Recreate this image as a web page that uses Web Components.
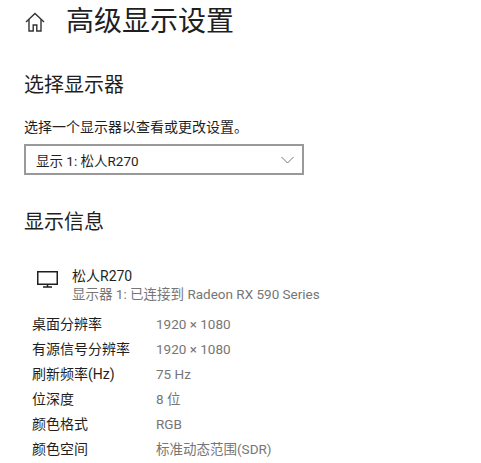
<!DOCTYPE html>
<html lang="zh-CN">
<head>
<meta charset="utf-8">
<style>
  html, body { margin: 0; padding: 0; background: #fff; }
  body { width: 481px; height: 463px; overflow: hidden; font-family: Roboto, "Noto Sans CJK SC", sans-serif; color: #1f1f1f; }
</style>
</head>
<body>
<settings-page>
  <page-title>高级显示设置</page-title>
  <section-heading style="--top:26px">选择显示器</section-heading>
  <p-label>选择一个显示器以查看或更改设置。</p-label>
  <display-select>显示 1: 松人R270</display-select>
  <section-heading style="--top:32px">显示信息</section-heading>
  <monitor-row name="松人R270" detail="显示器 1: 已连接到 Radeon RX 590 Series"></monitor-row>
  <info-row label="桌面分辨率" value="1920 × 1080"></info-row>
  <info-row label="有源信号分辨率" value="1920 × 1080"></info-row>
  <info-row label="刷新频率(Hz)" value="75 Hz"></info-row>
  <info-row label="位深度" value="8 位"></info-row>
  <info-row label="颜色格式" value="RGB"></info-row>
  <info-row label="颜色空间" value="标准动态范围(SDR)"></info-row>
</settings-page>
<script>
const FONT = 'Roboto, "Noto Sans CJK SC", sans-serif'

class SettingsPage extends HTMLElement {
  connectedCallback() {
    this.attachShadow({ mode: "open" })
    this.shadowRoot.innerHTML = `
      <style>
        :host { display: flex; flex-direction: column; font-family: ${FONT}; padding-left: 24px; }
      </style>
      <slot></slot>`
  }
}

class PageTitle extends HTMLElement {
  connectedCallback() {
    this.attachShadow({ mode: "open" })
    this.shadowRoot.innerHTML = `
      <style>
        :host { display: flex; align-items: center; gap: 20px; height: 44px; }
        svg { width: 22px; height: 22px; fill: none; stroke: #333; stroke-width: 1.4; }
        span { font-size: 28px; line-height: 44px; color: #1f1f1f; }
      </style>
      <svg viewBox="0 0 22 22">
        <path d="M2 11 11 2.500l9 8.500"/>
        <path d="M5 8.500V20h4.200v-6h3.600v6H17V8.500"/>
      </svg>
      <span><slot></slot></span>`
  }
}

class SectionHeading extends HTMLElement {
  connectedCallback() {
    this.attachShadow({ mode: "open" })
    this.shadowRoot.innerHTML = `
      <style>
        :host { display: block; margin-top: var(--top, 24px); font-size: 20px; line-height: 30px; color: #1f1f1f; }
      </style>
      <slot></slot>`
  }
}

class PLabel extends HTMLElement {
  connectedCallback() {
    this.attachShadow({ mode: "open" })
    this.shadowRoot.innerHTML = `
      <style>
        :host { display: block; margin-top: 17px; font-size: 14px; line-height: 20px; color: #1f1f1f; }
      </style>
      <slot></slot>`
  }
}

class DisplaySelect extends HTMLElement {
  connectedCallback() {
    this.attachShadow({ mode: "open" })
    this.shadowRoot.innerHTML = `
      <style>
        :host { display: flex; align-items: center; justify-content: space-between; box-sizing: border-box;
          width: 280px; height: 31px; margin-top: 7px; padding: 0 8px 0 10px;
          border: 2px solid #999; font-size: 13.5px; color: #1f1f1f; }
        svg { width: 13px; height: 8px; fill: none; stroke: #777; stroke-width: 1; }
      </style>
      <span><slot></slot></span>
      <svg viewBox="0 0 13 8"><path d="M.5 1 6.500 7 12.500 1"/></svg>`
  }
}

class MonitorRow extends HTMLElement {
  connectedCallback() {
    this.attachShadow({ mode: "open" })
    this.shadowRoot.innerHTML = `
      <style>
        :host { display: flex; margin-top: 30px; margin-bottom: 9px; padding-left: 12px; gap: 14px; font-size: 14px; line-height: 18px; }
        svg { width: 22px; height: 20px; margin-top: 4px; fill: none; stroke: #1f1f1f; stroke-width: 1.5; }
        .detail { color: #767676; font-size: 13.5px; }
      </style>
      <svg viewBox="0 0 22 20">
        <rect x="1.750" y=".75" width="19.500" height="12.500"/>
        <path d="M11.500 13.500V16M7 16h9"/>
      </svg>
      <div><div>${this.getAttribute("name")}</div><div class="detail">${this.getAttribute("detail")}</div></div>`
  }
}

class InfoRow extends HTMLElement {
  connectedCallback() {
    this.attachShadow({ mode: "open" })
    this.shadowRoot.innerHTML = `
      <style>
        :host { display: grid; grid-template-columns: 124px 1fr; height: 25px; margin-left: 8px; font-size: 14px; line-height: 25px; color: #1f1f1f; }
        .value { color: #767676; font-size: 13.5px; }
      </style>
      <div>${this.getAttribute("label")}</div><div class="value">${this.getAttribute("value")}</div>`
  }
}

customElements.define("settings-page", SettingsPage)
customElements.define("page-title", PageTitle)
customElements.define("section-heading", SectionHeading)
customElements.define("p-label", PLabel)
customElements.define("display-select", DisplaySelect)
customElements.define("monitor-row", MonitorRow)
customElements.define("info-row", InfoRow)
</script>
</body>
</html>
